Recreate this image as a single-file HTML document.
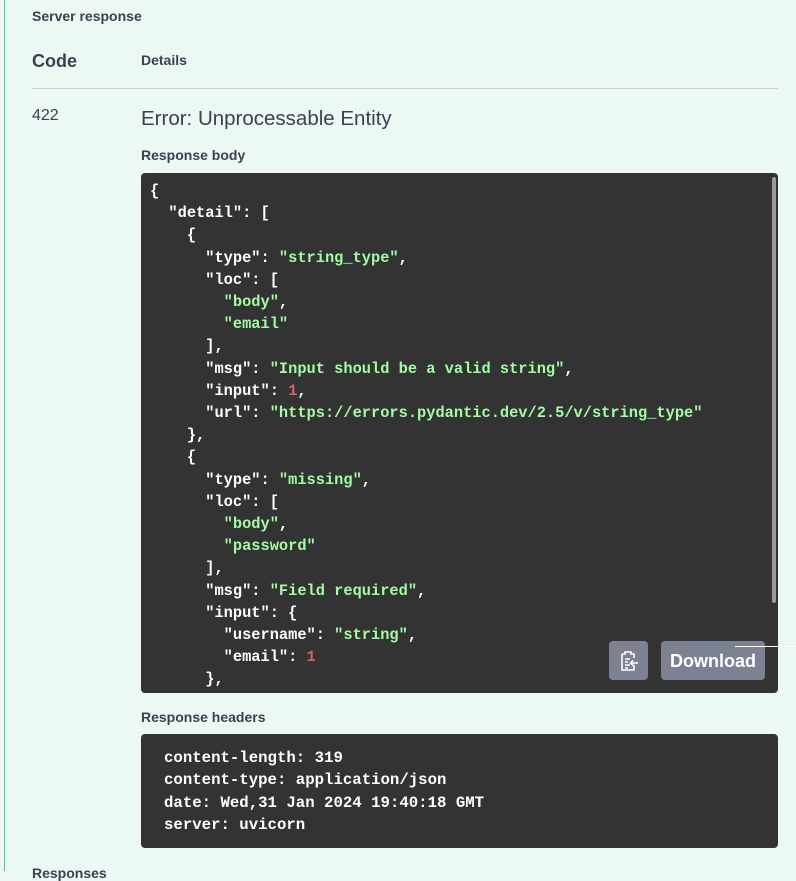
<!DOCTYPE html>
<html><head><meta charset="utf-8"><style>
html,body{margin:0;padding:0;width:796px;height:871px;overflow:hidden;background:#ebf8f3;font-family:"Liberation Sans",sans-serif;color:#3b4151}
.lb{position:absolute;left:4px;top:0;width:1px;height:871px;background:#49cc90}
.abs{position:absolute;white-space:pre}
.h{font-weight:bold;font-size:14px}
.code{position:absolute;left:141px;width:637px;background:#333;border-radius:4px;overflow:hidden}
.code pre{margin:0;font-family:"Liberation Mono","DejaVu Sans Mono",monospace;font-weight:bold;font-size:15.35px;line-height:22.2px;color:#fff}
.s{color:#a2fca2}.n{color:#d36363}
.btn{position:absolute;background:#7d8293;border-radius:4px;color:#fff;font-weight:bold;font-size:18px}
</style></head><body>
<div class="lb"></div>
<div class="abs h" style="left:32px;top:8px">Server response</div>
<div class="abs" style="left:32px;top:51px;font-weight:bold;font-size:18px">Code</div>
<div class="abs h" style="left:141px;top:52px">Details</div>
<div style="position:absolute;left:32px;top:88px;width:746px;height:1px;background:#c9d1cd"></div>
<div class="abs" style="left:32px;top:107px;font-size:16px">422</div>
<div class="abs" style="left:141px;top:107px;font-size:20.5px">Error: Unprocessable Entity</div>
<div class="abs h" style="left:141px;top:147px">Response body</div>
<div class="code" style="top:173px;height:520px">
<pre style="padding:7px 0 0 9px">{
  "detail": [
    {
      "type": <span class="s">"string_type"</span>,
      "loc": [
        <span class="s">"body"</span>,
        <span class="s">"email"</span>
      ],
      "msg": <span class="s">"Input should be a valid string"</span>,
      "input": <span class="n">1</span>,
      "url": <span class="s">"https://errors.pydantic.dev/2.5/v/string_type"</span>
    },
    {
      "type": <span class="s">"missing"</span>,
      "loc": [
        <span class="s">"body"</span>,
        <span class="s">"password"</span>
      ],
      "msg": <span class="s">"Field required"</span>,
      "input": {
        "username": <span class="s">"string"</span>,
        "email": <span class="n">1</span>
      },
</pre>
<div style="position:absolute;left:631px;top:4px;width:4px;height:426px;background:#9a9a9a;border-radius:2px"></div>
</div>
<div class="btn" style="left:609px;top:641px;width:39px;height:39px">
<svg width="39" height="39" viewBox="0 0 39 39"><g fill="none" stroke="#fff" stroke-width="1.6"><path d="M13 13h3v-2h6v2h3v4M25 24v5H13V13"/><path d="M16 18h5M16 21h3M16 24h5M16 27h3"/><path d="M29 22h-7M24 19.5l-2.5 2.5 2.5 2.5"/></g></svg>
</div>
<div class="btn" style="left:661px;top:641px;width:104px;height:39px;line-height:40px;text-align:center">Download</div>
<div style="position:absolute;left:735px;top:646px;width:61px;height:1px;background:#fff"></div>
<div class="abs h" style="left:141px;top:709px">Response headers</div>
<div class="code" style="top:734px;height:114px">
<pre style="padding:13px 0 0 23px;font-size:15.7px;line-height:22.3px">content-length: 319
content-type: application/json
date: Wed,31 Jan 2024 19:40:18 GMT
server: uvicorn</pre>
</div>
<div class="abs h" style="left:32px;top:865px">Responses</div>
</body></html>
